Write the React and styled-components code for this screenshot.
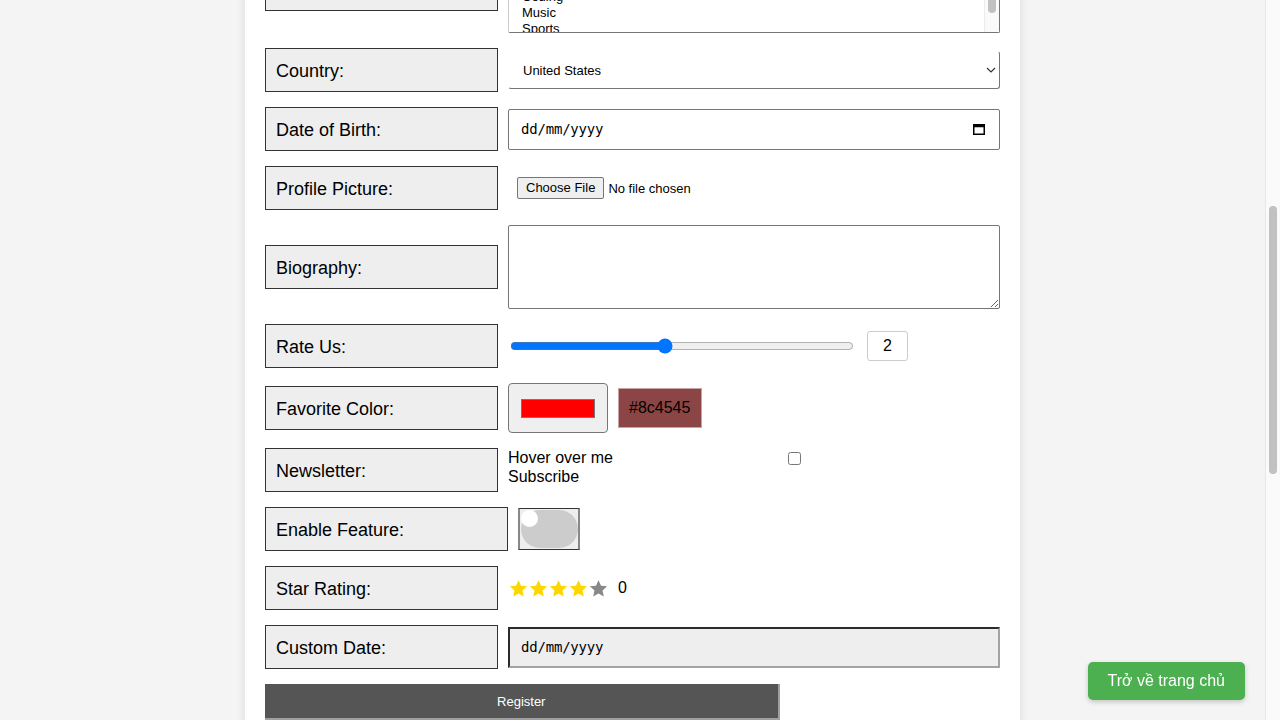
import React, { useLayoutEffect, useRef, useState } from 'react';
import styled, { createGlobalStyle } from 'styled-components';

const GlobalStyle = createGlobalStyle`
  html, body {
    margin: 0;
    padding: 0;
    background: #f4f4f4;
    font-family: "Liberation Sans", Arial, sans-serif;
    color: #000;
  }
`;

const Page = styled.div`
  min-height: 1934px;
  padding: 20px 15px 20px 0;
  box-sizing: border-box;
`;

const Card = styled.form`
  width: 735px;
  margin: 0 auto;
  padding: 20px;
  background: #fff;
  box-shadow: 0 0 10px rgba(0, 0, 0, 0.1);
`;

const Title = styled.h2`
  margin: 0 0 17px;
  font-size: 24px;
  text-align: center;
`;

const Row = styled.div`
  display: flex;
  align-items: ${(p) => (p.$top ? 'flex-start' : 'center')};
  gap: 10px;
  margin-bottom: 15px;
`;

const Label = styled.label`
  flex: none;
  box-sizing: border-box;
  width: ${(p) => (p.$wide ? '243px' : '233px')};
  height: 44px;
  padding: 11px 10px 9px;
  border: 1px solid #333;
  background: #eee;
  font-size: 18px;
  line-height: 22px;
`;

const Control = styled.div`
  width: 492px;
  display: flex;
  align-items: ${(p) => p.$align || 'center'};
  position: relative;
`;

const TextInput = styled.input`
  width: 100%;
  height: 40px;
  box-sizing: border-box;
  padding: 0 12px;
  border: 1px solid #767676;
  border-radius: 2px;
  font: 14px "Liberation Sans", Arial, sans-serif;
`;

const Radio = styled.label`
  display: flex;
  align-items: center;
  margin-right: 16px;
  font-size: 16px;
`;

const ListBox = styled.div`
  position: relative;
  width: 100%;
  height: 88px;
  box-sizing: border-box;
  padding: 11px 26px 10px 12px;
  border: 1px solid;
  border-color: #ccc #767676 #767676 #ccc;
  border-radius: 2px;
  overflow: hidden;
  font-size: 13px;
`;

const Option = styled.div`
  height: 16px;
  line-height: 16px;
  padding-left: 1px;
`;

const ListTrack = styled.div`
  position: absolute;
  top: 0;
  right: 0;
  bottom: 0;
  width: 14px;
  border-left: 1px solid #ececec;
  background: #fafafa;
`;

const ListThumb = styled.div`
  position: absolute;
  top: 2px;
  left: 3px;
  width: 8px;
  height: 65px;
  border-radius: 4px;
  background: #c1c1c1;
`;

const Select = styled.select`
  appearance: none;
  width: 100%;
  height: 38px;
  padding: 0 14px;
  border: 1px solid;
  border-color: #fff #767676 #767676 #fff;
  border-radius: 3px;
  background: #fff;
  font: 13px "Liberation Sans", Arial, sans-serif;
  color: #000;
`;

const Chevron = styled.svg`
  position: absolute;
  right: 4px;
  top: 15px;
  pointer-events: none;
`;

const DateBox = styled.div`
  width: 100%;
  height: 41px;
  box-sizing: border-box;
  display: flex;
  align-items: center;
  justify-content: space-between;
  padding: ${(p) => (p.$custom ? '0 11px' : '0 14px 0 12px')};
  border: ${(p) => (p.$custom ? '2px solid' : '1px solid')};
  border-color: ${(p) => (p.$custom ? '#2b2b2b #a3a3a3 #a3a3a3 #2b2b2b' : '#767676')};
  border-radius: ${(p) => (p.$custom ? '0' : '2px')};
  background: ${(p) => (p.$custom ? '#eee' : '#fff')};
  font: 14px "DejaVu Sans Mono", "Liberation Mono", monospace;
  letter-spacing: -0.2px;
`;

const FileButton = styled.span`
  margin-left: 9px;
  padding: 2px 8px;
  border: 1px solid #767676;
  border-radius: 2px;
  background: #efefef;
  font-size: 13px;
  line-height: 16px;
`;

const FileText = styled.span`
  margin-left: 4px;
  font-size: 13px;
`;

const TextArea = styled.textarea`
  width: 100%;
  height: 84px;
  box-sizing: border-box;
  border: 1px solid #767676;
  border-radius: 2px;
  font: 13px "Liberation Sans", Arial, sans-serif;
`;

const Range = styled.input`
  width: 344px;
  margin: 0 2px;
`;

const RangeValue = styled.output`
  margin-left: 11px;
  padding: 5px 15px;
  border: 1px solid #ccc;
  border-radius: 3px;
  font-size: 16px;
  line-height: 18px;
`;

const ColorWell = styled.div`
  width: 100px;
  height: 50px;
  box-sizing: border-box;
  display: flex;
  align-items: center;
  justify-content: center;
  border: 1px solid #767676;
  border-radius: 4px;
  background: #efefef;
`;

const Swatch = styled.div`
  width: 74px;
  height: 19px;
  box-sizing: border-box;
  border: 1px solid #777;
  background: ${(p) => p.$color};
`;

const HexBox = styled.div`
  margin-left: 10px;
  width: 84px;
  height: 40px;
  box-sizing: border-box;
  padding: 10px;
  border: 1px solid #c7a3a3;
  background: ${(p) => p.$color};
  font-size: 16px;
  line-height: 18px;
`;

const Tip = styled.div`
  width: 276px;
  font-size: 16px;
  line-height: 19px;
`;

const CheckBox = styled.input`
  margin: 4px 3px 3px 4px;
  width: 13px;
  height: 13px;
`;

const Switch = styled.label`
  position: relative;
  display: block;
  width: 62px;
  height: 42px;
  box-sizing: border-box;
  border-style: solid;
  border-width: 1px 2px;
  border-color: #333 #888;
  background: #eee;

  input {
    display: none;
  }
`;

const Track = styled.span`
  position: absolute;
  inset: 1px 0 1px 1px;
  border-radius: 20px;
  background: ${(p) => (p.$on ? '#4caf50' : '#ccc')};
`;

const Knob = styled.span`
  position: absolute;
  top: 1px;
  left: ${(p) => (p.$on ? '40px' : '1px')};
  width: 17px;
  height: 17px;
  border-radius: 50%;
  background: #fff;
`;

const Stars = styled.div`
  display: flex;
  align-items: center;
  gap: 1px;
  margin-left: 1px;
`;

const StarCount = styled.span`
  margin-left: 10px;
  font-size: 16px;
`;

const Submit = styled.button`
  display: block;
  width: 70%;
  height: 36px;
  border: none;
  border-right: 2px solid #a0a0a0;
  border-bottom: 2px solid #a0a0a0;
  background: #555;
  color: #fff;
  font: 13px "Liberation Sans", Arial, sans-serif;
`;

const HomeButton = styled.a`
  position: fixed;
  right: 35px;
  bottom: 20px;
  padding: 10px 20px;
  border-radius: 5px;
  background: #4caf50;
  color: #fff;
  font-size: 16px;
  line-height: 18px;
  text-decoration: none;
  box-shadow: 0 2px 5px rgba(0, 0, 0, 0.2);
`;

// page scrollbar, drawn since the browser's own is hidden
const ScrollTrack = styled.div`
  position: fixed;
  top: 0;
  right: 0;
  bottom: 0;
  width: 14px;
  border-left: 1px solid #e6e6e6;
  background: #fafafa;
`;

const ScrollThumb = styled.div`
  position: absolute;
  left: 3px;
  width: 8px;
  border-radius: 4px;
  background: #c1c1c1;
`;

const interests = ['Reading', 'Travel', 'Coding', 'Music', 'Sports', 'Gaming'];

const Star = ({ filled }) => (
  <svg width="19" height="19" viewBox="0 0 24 24">
    <path
      d="M12 1.5l3.2 7 7.6.8-5.7 5.1 1.6 7.6L12 18.2 5.3 22l1.6-7.6L1.2 9.3l7.6-.8z"
      fill={filled ? '#ffd700' : '#888'}
    />
  </svg>
);

const CalendarIcon = () => (
  <svg width="12" height="12" viewBox="0 0 12 12">
    <rect x="0.75" y="1.75" width="10.5" height="9.5" fill="none" stroke="#000" strokeWidth="1.5" />
    <rect x="0.75" y="1.75" width="10.5" height="2.5" fill="#000" />
  </svg>
);

export default function App() {
  const listRef = useRef(null);
  const [feature, setFeature] = useState(false);
  const [thumb, setThumb] = useState({ top: 0, height: 0 });

  useLayoutEffect(() => {
    const box = listRef.current.getBoundingClientRect();
    window.scrollTo(0, box.bottom + window.scrollY - 33);

    const view = window.innerHeight;
    const total = document.documentElement.scrollHeight;
    setThumb({
      top: (window.scrollY / total) * view,
      height: (view / total) * view
    });
  }, []);

  return (
    <Page>
      <GlobalStyle />
      <Card onSubmit={(e) => e.preventDefault()}>
        <Title>Registration Form</Title>

        <Row>
          <Label>Username:</Label>
          <Control><TextInput type="text" /></Control>
        </Row>
        <Row>
          <Label>Email:</Label>
          <Control><TextInput type="email" /></Control>
        </Row>
        <Row>
          <Label>Password:</Label>
          <Control><TextInput type="password" /></Control>
        </Row>
        <Row>
          <Label>Confirm Password:</Label>
          <Control><TextInput type="password" /></Control>
        </Row>
        <Row>
          <Label>Phone Number:</Label>
          <Control><TextInput type="tel" /></Control>
        </Row>
        <Row>
          <Label>Website:</Label>
          <Control><TextInput type="url" /></Control>
        </Row>
        <Row>
          <Label>Gender:</Label>
          <Control>
            <Radio><input type="radio" name="gender" />Male</Radio>
            <Radio><input type="radio" name="gender" />Female</Radio>
            <Radio><input type="radio" name="gender" />Other</Radio>
          </Control>
        </Row>

        <Row>
          <Label>Interests:</Label>
          <Control>
            <ListBox ref={listRef} role="listbox">
              {interests.map((item) => (
                <Option key={item}>{item}</Option>
              ))}
              <ListTrack>
                <ListThumb />
              </ListTrack>
            </ListBox>
          </Control>
        </Row>

        <Row>
          <Label>Country:</Label>
          <Control>
            <Select defaultValue="us">
              <option value="us">United States</option>
              <option value="vn">Vietnam</option>
              <option value="uk">United Kingdom</option>
            </Select>
            <Chevron width="10" height="8" viewBox="0 0 10 8">
              <path d="M1 2l4 4 4-4" fill="none" stroke="#333" strokeWidth="1.2" />
            </Chevron>
          </Control>
        </Row>

        <Row>
          <Label>Date of Birth:</Label>
          <Control>
            <DateBox>
              <span>dd/mm/yyyy</span>
              <CalendarIcon />
            </DateBox>
          </Control>
        </Row>

        <Row>
          <Label>Profile Picture:</Label>
          <Control>
            <FileButton>Choose File</FileButton>
            <FileText>No file chosen</FileText>
          </Control>
        </Row>

        <Row>
          <Label>Biography:</Label>
          <Control><TextArea /></Control>
        </Row>

        <Row>
          <Label>Rate Us:</Label>
          <Control>
            <Range type="range" min="0" max="100" step="any" defaultValue="44.8" />
            <RangeValue>2</RangeValue>
          </Control>
        </Row>

        <Row>
          <Label>Favorite Color:</Label>
          <Control>
            <ColorWell><Swatch $color="#ff0000" /></ColorWell>
            <HexBox $color="#8c4545">#8c4545</HexBox>
          </Control>
        </Row>

        <Row $top>
          <Label>Newsletter:</Label>
          <Control $align="flex-start">
            <Tip>
              Hover over me
              <br />
              Subscribe
            </Tip>
            <CheckBox type="checkbox" />
          </Control>
        </Row>

        <Row>
          <Label $wide>Enable Feature:</Label>
          <Switch>
            <input type="checkbox" checked={feature} onChange={() => setFeature(!feature)} />
            <Track $on={feature} />
            <Knob $on={feature} />
          </Switch>
        </Row>

        <Row>
          <Label>Star Rating:</Label>
          <Control>
            <Stars>
              {[1, 2, 3, 4, 5].map((n) => (
                <Star key={n} filled={n <= 4} />
              ))}
            </Stars>
            <StarCount>0</StarCount>
          </Control>
        </Row>

        <Row>
          <Label>Custom Date:</Label>
          <Control>
            <DateBox $custom>
              <span>dd/mm/yyyy</span>
            </DateBox>
          </Control>
        </Row>

        <Submit type="submit">Register</Submit>
      </Card>

      <HomeButton href="#">Trở về trang chủ</HomeButton>

      <ScrollTrack>
        <ScrollThumb style={{ top: thumb.top, height: thumb.height }} />
      </ScrollTrack>
    </Page>
  );
}
